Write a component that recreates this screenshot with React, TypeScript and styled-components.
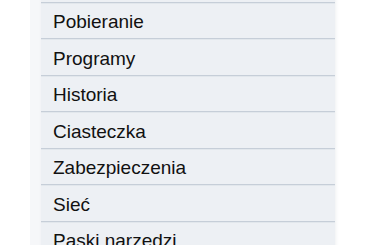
import React from 'react';
import styled, { createGlobalStyle } from 'styled-components';

const GlobalStyle = createGlobalStyle`
  html, body {
    margin: 0;
    padding: 0;
    background: #ffffff;
  }
  body {
    width: 370px;
    height: 245px;
    overflow: hidden;
  }
`;

const Page = styled.div`
  height: 245px;
  overflow: hidden;
  padding-left: 41px;
  background: linear-gradient(to right, #ffffff 30px, #f6f7f9 30px, #f6f7f9 41px, #ffffff 41px);
`;

const Menu = styled.ul`
  list-style: none;
  margin: -34px 0 0 0;
  padding: 0;
  width: 294px;
  background: #edf0f4;
  box-shadow: 1px 0 3px rgba(120, 130, 145, 0.12);
`;

const Item = styled.li`
  box-sizing: border-box;
  height: 36.5px;
  display: flex;
  align-items: center;
  padding: 3px 0 0 12px;
  border-top: 1px solid #e2e7ec;
  border-bottom: 1px solid #c6ced8;
  font-family: 'Liberation Sans', Arial, sans-serif;
  font-size: 19px;
  color: #111111;
`;

const items = [
  '',
  'Pobieranie',
  'Programy',
  'Historia',
  'Ciasteczka',
  'Zabezpieczenia',
  'Sieć',
  'Paski narzędzi',
];

const App = () => {
  return (
    <>
      <GlobalStyle />
      <Page>
        <Menu>
          {items.map((label, i) => (
            <Item key={i}>{label}</Item>
          ))}
        </Menu>
      </Page>
    </>
  );
};

export default App;
